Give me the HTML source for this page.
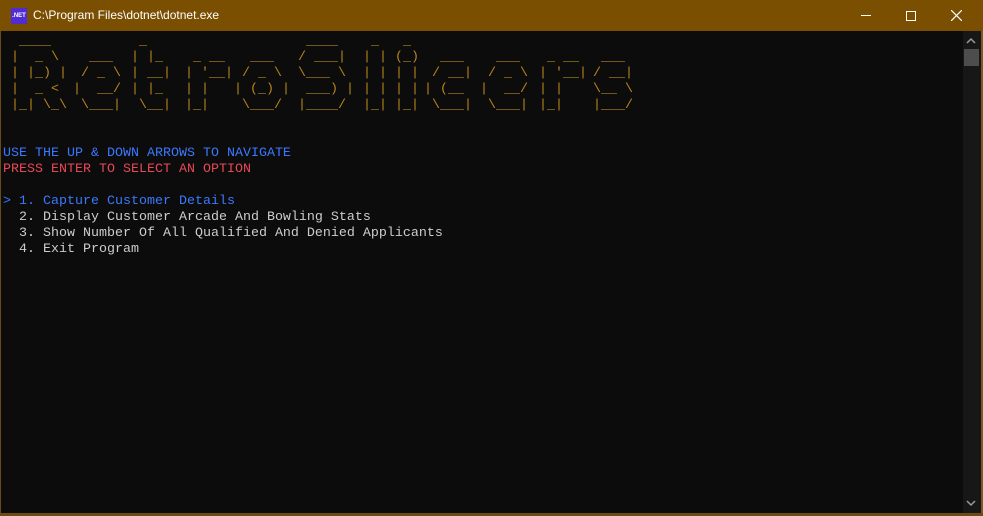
<!DOCTYPE html>
<html><head><style>
body{margin:0;width:983px;height:516px;overflow:hidden;background:#0c0c0c;position:relative;font-family:"Liberation Mono",monospace}
#tb{position:absolute;left:0;top:0;width:983px;height:31px;background:#7a4f02}
#bl{position:absolute;left:0;top:31px;width:1px;height:485px;background:#6b4a14}
#br{position:absolute;left:981px;top:31px;width:2px;height:485px;background:#7a5a2a}
#bb{position:absolute;left:0;top:513px;width:983px;height:3px;background:#6b4a14}
#sb{position:absolute;left:963px;top:31px;width:18px;height:482px;background:#171717}
#th{position:absolute;left:964px;top:49px;width:15px;height:17px;background:#4d4d4d}
.t{position:absolute;font-size:13.33px;line-height:16px;white-space:pre;margin:0}
pre.a{position:absolute;top:34px;margin:0;font-family:"Liberation Mono",monospace;font-size:13.33px;line-height:16px;color:#b8861c}
</style></head><body>
<div id="tb"></div>
<div style="position:absolute;left:11px;top:8px;width:16px;height:16px;background:#512bd4;color:#fff;font:bold 6px 'Liberation Sans',sans-serif;line-height:16px;text-align:center">.NET</div>
<div style="position:absolute;left:33px;top:8px;font:12px 'Liberation Sans',sans-serif;color:#fff">C:\Program Files\dotnet\dotnet.exe</div>
<div style="position:absolute;left:861px;top:15px;width:10px;height:1px;background:#fff"></div>
<div style="position:absolute;left:906px;top:11px;width:8px;height:8px;border:1px solid #fff"></div>
<svg style="position:absolute;left:951px;top:10px" width="11" height="11"><path d="M0 0L11 11M11 0L0 11" stroke="#fff" stroke-width="1.2"/></svg>
<div id="bl"></div><div id="br"></div><div id="bb"></div>
<div id="sb"></div><div id="th"></div>
<svg style="position:absolute;left:966px;top:38px" width="10" height="6"><path d="M1 5L5 1L9 5" stroke="#999" fill="none" stroke-width="1.5"/></svg>
<svg style="position:absolute;left:966px;top:500px" width="10" height="6"><path d="M1 1L5 5L9 1" stroke="#999" fill="none" stroke-width="1.5"/></svg>
<pre class="a" style="left:3px">  ____  
 |  _ \ 
 | |_) |
 |  _ &lt; 
 |_| \_\</pre>
<pre class="a" style="left:73px">      
  ___ 
 / _ \
|  __/
 \___|</pre>
<pre class="a" style="left:131px"> _   
| |_ 
| __|
| |_ 
 \__|</pre>
<pre class="a" style="left:185px">      
 _ __ 
| '__|
| |   
|_|   </pre>
<pre class="a" style="left:234px">       
  ___  
 / _ \ 
| (_) |
 \___/ </pre>
<pre class="a" style="left:298px"> ____  
/ ___| 
\___ \ 
 ___) |
|____/ </pre>
<pre class="a" style="left:363px"> _ 
| |
| |
| |
|_|</pre>
<pre class="a" style="left:395px"> _ 
(_)
| |
| |
|_|</pre>
<pre class="a" style="left:424px">      
  ___ 
 / __|
| (__ 
 \___|</pre>
<pre class="a" style="left:480px">      
  ___ 
 / _ \
|  __/
 \___|</pre>
<pre class="a" style="left:539px">      
 _ __ 
| '__|
| |   
|_|   </pre>
<pre class="a" style="left:593px">     
 ___ 
/ __|
\__ \
|___/</pre>
<div class="t" style="left:3px;top:146px;color:#3b78ff">USE THE UP &amp; DOWN ARROWS TO NAVIGATE</div>
<div class="t" style="left:3px;top:162px;color:#e74856">PRESS ENTER TO SELECT AN OPTION</div>
<div class="t" style="left:3px;top:194px;color:#3b78ff">&gt; 1. Capture Customer Details</div>
<div class="t" style="left:3px;top:210px;color:#cccccc">  2. Display Customer Arcade And Bowling Stats</div>
<div class="t" style="left:3px;top:226px;color:#cccccc">  3. Show Number Of All Qualified And Denied Applicants</div>
<div class="t" style="left:3px;top:242px;color:#cccccc">  4. Exit Program</div>
</body></html>
